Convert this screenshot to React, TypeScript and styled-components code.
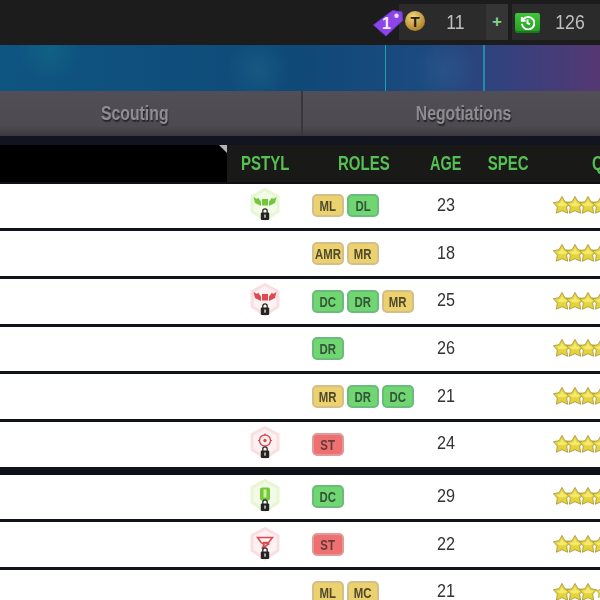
import { createGlobalStyle, styled } from 'styled-components';

const GlobalStyle = createGlobalStyle`
  html, body {
    margin: 0;
    padding: 0;
    background: #0d0f16;
  }
  * {
    box-sizing: border-box;
  }
`;

const FONT = `"Liberation Sans", Arial, sans-serif`;
const COLUMNS = '227px 76px 125px 36px 89px 47px';

type Tone = 'yellow' | 'green' | 'red';

const TONES: Record<Tone, { bg: string; border: string; text: string }> = {
  yellow: { bg: '#ecd16f', border: '#d3bf8c', text: '#4f4a2c' },
  green: { bg: '#6fd671', border: '#6bbb7c', text: '#35553a' },
  red: { bg: '#ee7070', border: '#e19a9a', text: '#633a3a' },
};

type StyleKind = 'wings' | 'target' | 'shield' | 'funnel';

type Player = {
  age: number;
  roles: [string, Tone][];
  style?: { kind: StyleKind; color: string; ring: string; fill: string };
  stars: number;
};

const GREEN_HEX = { color: '#72c83a', ring: '#e6f7d2', fill: '#f3fbe8' };
const RED_HEX = { color: '#dd4b52', ring: '#fadfe2', fill: '#fdf1f2' };

const FIRST_GROUP: Player[] = [
  { age: 23, roles: [['ML', 'yellow'], ['DL', 'green']], style: { kind: 'wings', ...GREEN_HEX }, stars: 4 },
  { age: 18, roles: [['AMR', 'yellow'], ['MR', 'yellow']], stars: 4 },
  { age: 25, roles: [['DC', 'green'], ['DR', 'green'], ['MR', 'yellow']], style: { kind: 'wings', ...RED_HEX }, stars: 4 },
  { age: 26, roles: [['DR', 'green']], stars: 4 },
  { age: 21, roles: [['MR', 'yellow'], ['DR', 'green'], ['DC', 'green']], stars: 4 },
  { age: 24, roles: [['ST', 'red']], style: { kind: 'target', ...RED_HEX }, stars: 4 },
];

const SECOND_GROUP: Player[] = [
  { age: 29, roles: [['DC', 'green']], style: { kind: 'shield', ...GREEN_HEX }, stars: 4 },
  { age: 22, roles: [['ST', 'red']], style: { kind: 'funnel', ...RED_HEX }, stars: 4 },
  { age: 21, roles: [['ML', 'yellow'], ['MC', 'yellow']], stars: 3 },
];

const StyleGlyph = ({ kind, color }: { kind: StyleKind; color: string }) => {
  if (kind === 'wings') {
    return (
      <g fill={color}>
        <rect x="12" y="12" width="6" height="6.500" />
        <path d="M11 19 5 16 3.500 10l3.500 2 1-1.500 3 4zM19 19l6-3 1.500-6-3.500 2-1-1.500-3 4z" />
      </g>
    );
  }
  if (kind === 'target') {
    return (
      <g fill="none" stroke={color}>
        <circle cx="15" cy="15.500" r="5.500" strokeWidth="1.400" />
        <circle cx="15" cy="15.500" r="1.700" fill={color} stroke="none" />
        <path d="M15 8.500v2M8 15.500h2M20 15.500h2" strokeWidth="1.200" />
      </g>
    );
  }
  if (kind === 'shield') {
    return (
      <g>
        <rect x="10" y="9.500" width="10" height="13" rx="2" fill={color} />
        <rect x="13.500" y="11.500" width="3" height="8" fill="#c8ef9a" />
      </g>
    );
  }
  return (
    <path d="M7.500 11.500h15l-4 5h-5.500l5.500 1.500-6.500 4.500 2-4-3-2z" fill="none" stroke={color} strokeWidth="1.600" />
  );
};

const PlayStyleIcon = ({ style }: { style: NonNullable<Player['style']> }) => (
  <HexSvg width="30" height="36" viewBox="0 0 30 36">
    <path d="M15 2.500 28 9.500v15L15 33 2 24.500v-15z" fill={style.fill} stroke={style.ring} strokeWidth="3" strokeLinejoin="round" />
    <StyleGlyph kind={style.kind} color={style.color} />
    <path d="M12.800 26v-2a2.200 2.200 0 0 1 4.400 0v2" fill="none" stroke="#2a2a2a" strokeWidth="1.300" />
    <rect x="10.800" y="25.500" width="8.400" height="7.500" rx="1" fill="#232323" />
    <rect x="14.400" y="27.500" width="1.200" height="3.200" fill="#fff" />
  </HexSvg>
);

const Star = ({ small }: { small?: boolean }) => (
  <StarSvg viewBox="0 0 24 24" $small={small}>
    <path
      d="M12 .5 15.900 7.600 23.500 8.900 18.200 14.800 19.500 23 12 19.500 4.500 23 5.800 14.800.5 8.900 8.100 7.600z"
      fill="#e6d338"
      stroke="#a89a45"
      strokeWidth="1.200"
      strokeLinejoin="round"
    />
    <path d="M12 5 14.500 9.700 19.500 10.500 15.500 13.500H8.500L4.500 10.500 9.500 9.700z" fill="#f4ea72" />
  </StarSvg>
);

const PlayerRow = ({ player }: { player: Player }) => (
  <Row>
    <span />
    <IconCell>{player.style && <PlayStyleIcon style={player.style} />}</IconCell>
    <Roles>
      {player.roles.map(([label, tone], i) => (
        <Role key={i} $tone={tone}>
          <Condensed $x={0.76}>{label}</Condensed>
        </Role>
      ))}
    </Roles>
    <Age>{player.age}</Age>
    <span />
    <Stars>
      {Array.from({ length: player.stars }, (_, i) => (
        <Star key={i} />
      ))}
      {player.stars < 4 && <Star small />}
    </Stars>
  </Row>
);

export default function App() {
  return (
    <>
      <GlobalStyle />
      <Page>
        <TopBar>
          <Wallet>
            <Badge>
              <svg width="30" height="27" viewBox="0 0 30 27">
                <path d="M.5 15 19.500.5 29 2l.5 8.500L13 26z" fill="#8b45e8" stroke="#7433d2" strokeWidth="1" strokeLinejoin="round" />
                <circle cx="23.500" cy="5.700" r="2.200" fill="#e8def8" />
              </svg>
              <BadgeCount>1</BadgeCount>
            </Badge>
            <CoinIcon>T</CoinIcon>
            <Amount $width={61}>11</Amount>
            <PlusButton>+</PlusButton>
          </Wallet>
          <Wallet>
            <CashIcon>
              <svg width="15" height="15" viewBox="0 0 24 24" fill="none" stroke="#fff" strokeWidth="3.200">
                <path d="M5 7A10 10 0 1 1 3 14" />
                <path d="M3 3v6h6M12 7v6l4 2" />
              </svg>
            </CashIcon>
            <Amount $width={60}>126</Amount>
          </Wallet>
        </TopBar>
        <Banner />
        <Tabs>
          <Tab>
            <Condensed $x={0.79}>Scouting</Condensed>
          </Tab>
          <Tab>
            <Condensed $x={0.79}>Negotiations</Condensed>
          </Tab>
        </Tabs>
        <Strip />
        <Header>
          <HeaderBlank />
          <HeaderCell>
            <Condensed $x={0.75}>PSTYL</Condensed>
          </HeaderCell>
          <HeaderCell $pad={35}>
            <Condensed $x={0.75} $left>ROLES</Condensed>
          </HeaderCell>
          <HeaderCell>
            <Condensed $x={0.72}>AGE</Condensed>
          </HeaderCell>
          <HeaderCell>
            <Condensed $x={0.75}>SPEC</Condensed>
          </HeaderCell>
          <HeaderCell $pad={39}>
            <Condensed $x={0.75} $left>QUALITY</Condensed>
          </HeaderCell>
        </Header>
        <Group>
          {FIRST_GROUP.map((player, i) => (
            <PlayerRow key={i} player={player} />
          ))}
        </Group>
        <Group>
          {SECOND_GROUP.map((player, i) => (
            <PlayerRow key={i} player={player} />
          ))}
        </Group>
      </Page>
    </>
  );
}

const Page = styled.div`
  width: 600px;
  height: 600px;
  overflow: hidden;
  background: #0d0f16;
  font-family: ${FONT};
`;

const Condensed = styled.span<{ $x: number; $left?: boolean }>`
  display: inline-block;
  flex: none;
  white-space: nowrap;
  transform: scaleX(${(p) => p.$x});
  transform-origin: ${(p) => (p.$left ? 'left' : 'center')} center;
`;

const TopBar = styled.div`
  display: flex;
  justify-content: flex-end;
  gap: 4px;
  height: 45px;
  padding-top: 4px;
  background: #1c1c1d;
`;

const Wallet = styled.div`
  position: relative;
  display: flex;
  align-items: center;
  height: 36px;
  padding-left: 6px;
  background: #2b2b2c;
`;

const Badge = styled.div`
  position: absolute;
  left: -26px;
  top: 6px;
  width: 30px;
  height: 27px;
`;

const BadgeCount = styled.span`
  position: absolute;
  left: 9px;
  top: 5px;
  color: #f3ecff;
  font-size: 16px;
  font-weight: 700;
`;

const CoinIcon = styled.div`
  display: flex;
  align-items: center;
  justify-content: center;
  width: 20px;
  height: 20px;
  margin-bottom: 2px;
  border-radius: 50%;
  background: radial-gradient(circle at 40% 30%, #f3d67e, #a97c22 80%);
  color: #2a1f08;
  font-size: 15px;
  font-weight: 700;
`;

const CashIcon = styled.div`
  display: flex;
  align-items: center;
  justify-content: center;
  width: 25px;
  height: 18px;
  margin-left: -3px;
  border-radius: 2px;
  background: linear-gradient(#41c53a, #26a024);
  box-shadow: 0 2px 0 #1a7a1c;
`;

const Amount = styled.div<{ $width: number }>`
  width: ${(p) => p.$width}px;
  color: #c0c0c0;
  font-size: 20px;
  text-align: center;
  transform: scaleX(0.88);
`;

const PlusButton = styled.div`
  display: flex;
  align-items: center;
  justify-content: center;
  width: 22px;
  height: 36px;
  background: #353536;
  color: #7fd58a;
  font-size: 17px;
  font-weight: 700;
`;

const Banner = styled.div`
  height: 46px;
  background:
    linear-gradient(90deg, transparent 384.500px, #1f9fae 385px, #1f9fae 386px, transparent 386.500px, transparent 482.500px, #1f8fa8 483px, #1f8fa8 485px, transparent 485.500px),
    radial-gradient(circle at 258px 25px, rgba(40, 120, 150, 0.3), transparent 32px),
    radial-gradient(circle at 445px 25px, rgba(70, 130, 180, 0.18), transparent 32px),
    radial-gradient(circle at 50px 5px, rgba(20, 130, 140, 0.3), transparent 32px),
    linear-gradient(90deg, #0f5582 0, #0f4978 50%, #1b4a7f 70%, #35417d 85%, #553873 100%);
`;

const Tabs = styled.div`
  display: grid;
  grid-template-columns: 332px 322px;
  gap: 2px;
  height: 45px;
  margin-left: -31px;
  background: #3a373c;
`;

const Tab = styled.div`
  display: flex;
  align-items: center;
  justify-content: center;
  background: linear-gradient(#524e56 0, #4e4a52 78%, #3a373d 100%);
  color: #8f8c92;
  font-size: 20px;
  font-weight: 700;
  text-shadow: 1px 2px 1px #29272c;
`;

const Strip = styled.div`
  height: 9px;
  background: #12141f;
`;

const Header = styled.div`
  display: grid;
  grid-template-columns: ${COLUMNS};
  height: 37px;
  margin-bottom: 1.500px;
  background: #191a18;
`;

const HeaderBlank = styled.div`
  position: relative;
  background: #000;

  &::after {
    content: '';
    position: absolute;
    top: 0;
    right: 0;
    border-style: solid;
    border-width: 0 8px 8px 0;
    border-color: transparent #b5b5b5 transparent transparent;
  }
`;

const HeaderCell = styled.div<{ $pad?: number }>`
  display: flex;
  align-items: center;
  justify-content: ${(p) => (p.$pad ? 'flex-start' : 'center')};
  padding-left: ${(p) => p.$pad ?? 0}px;
  color: #56c052;
  font-size: 20px;
  font-weight: 700;
`;

const Group = styled.div`
  margin-bottom: 5px;
`;

const Row = styled.div`
  display: grid;
  grid-template-columns: ${COLUMNS};
  align-items: center;
  height: 47.700px;
  border-bottom: 3px solid #11131b;
  background: #fff;
`;

const IconCell = styled.div`
  display: flex;
  justify-content: center;
  height: 36px;
`;

const HexSvg = styled.svg`
  margin-top: -1px;
  filter: blur(0.3px);
`;

const Roles = styled.div`
  display: flex;
  gap: 3px;
  padding-left: 9px;
`;

const Role = styled.div<{ $tone: Tone }>`
  display: flex;
  align-items: center;
  justify-content: center;
  width: 32px;
  height: 23px;
  border: 2px solid ${(p) => TONES[p.$tone].border};
  border-radius: 5px;
  background: ${(p) => TONES[p.$tone].bg};
  color: ${(p) => TONES[p.$tone].text};
  font-size: 15px;
  font-weight: 700;
`;

const Age = styled.div`
  margin-top: -2px;
  color: #333;
  font-size: 18px;
  line-height: 16px;
  text-align: center;
  transform: scaleX(0.9);
`;

const Stars = styled.div`
  display: flex;
  align-items: center;
  margin-top: -1px;
`;

const StarSvg = styled.svg<{ $small?: boolean }>`
  flex: none;
  width: ${(p) => (p.$small ? 12 : 18)}px;
  height: ${(p) => (p.$small ? 12 : 18)}px;
  margin-left: ${(p) => (p.$small ? 4 : 0)}px;
  margin-right: -5px;
`;
